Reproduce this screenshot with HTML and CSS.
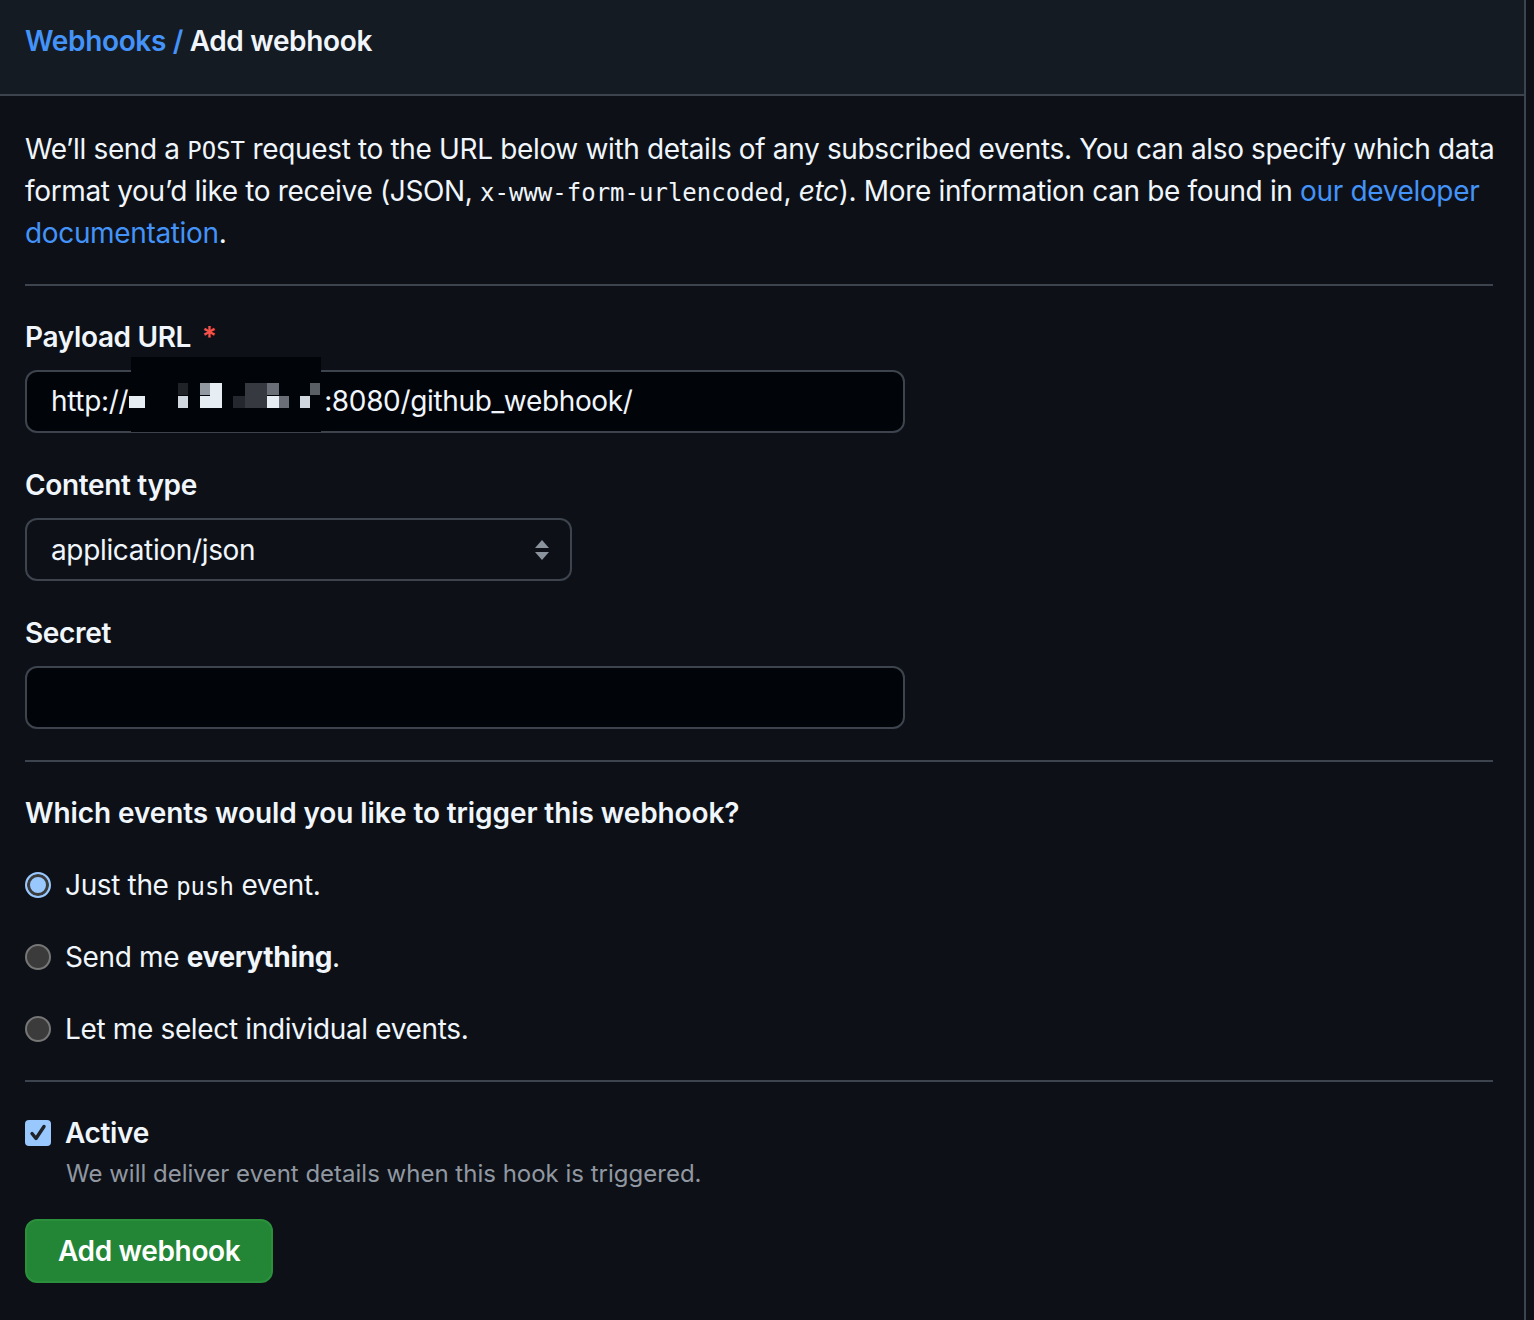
FILE: index.html
```html
<!DOCTYPE html>
<html lang="en">
<head>
<meta charset="utf-8">
<title>Add webhook</title>
<link rel="stylesheet" href="styles.css">
</head>
<body>
<div class="panel">
  <header class="subhead">
    <h2 class="subhead-title"><a href="#" class="crumb">Webhooks</a> <span class="sep">/</span> Add webhook</h2>
  </header>
  <div class="content">
    <p class="intro">We’ll send a <code>POST</code> request to the URL below with details of any subscribed events. You can also specify which data format you’d like to receive (JSON, <code>x-www-form-urlencoded</code>, <em>etc</em>). More information can be found in <a href="#">our developer documentation</a>.</p>

    <hr class="rule">

    <div class="field">
      <label class="label">Payload URL <span class="req">*</span></label>
      <div class="input-wrap">
        <div class="input">http://<span class="gap"></span>:8080/github_webhook/</div>
        <div class="redact">
          <span class="px p1"></span>
          <span class="px p2"></span>
          <span class="px p3"></span>
          <span class="px p4"></span>
          <span class="px p5"></span>
          <span class="px p6"></span>
          <span class="px p7"></span>
          <span class="px p8"></span>
          <span class="px p9"></span>
          <span class="px p10"></span>
          <span class="px p11"></span>
          <span class="px p12"></span>
        </div>
      </div>
    </div>

    <div class="field">
      <label class="label">Content type</label>
      <div class="select">
        <span>application/json</span>
        <svg class="updown" width="16" height="22" viewBox="0 0 16 22"><path d="M8 1 L15 9 H1 Z" fill="#8b939d"/><path d="M1 13 H15 L8 21 Z" fill="#8b939d"/></svg>
      </div>
    </div>

    <div class="field">
      <label class="label">Secret</label>
      <div class="input"></div>
    </div>

    <hr class="rule rule2">

    <h3 class="events-title">Which events would you like to trigger this webhook?</h3>

    <div class="radios">
      <div class="radio-row"><span class="radio checked"></span><span>Just the <code>push</code> event.</span></div>
      <div class="radio-row"><span class="radio"></span><span>Send me <strong>everything</strong>.</span></div>
      <div class="radio-row"><span class="radio"></span><span>Let me select individual events.</span></div>
    </div>

    <hr class="rule rule3">

    <div class="active">
      <div class="active-row">
        <span class="checkbox"><svg width="26" height="26" viewBox="0 0 26 26"><path d="M7 13.5 L11 18.5 L19 6.5" fill="none" stroke="#1f2328" stroke-width="3.4" stroke-linecap="round" stroke-linejoin="round"/></svg></span>
        <span class="active-label">Active</span>
      </div>
      <p class="note">We will deliver event details when this hook is triggered.</p>
    </div>

    <button class="btn">Add webhook</button>
  </div>
</div>
</body>
</html>
```

FILE: styles.css
```css
* { box-sizing: border-box; }
html, body { margin: 0; padding: 0; }
body {
  background: #0d1117;
  color: #f0f6fc;
  font-family: Inter, "Noto Sans", "Liberation Sans", sans-serif;
  font-size: 28px;
  line-height: 42px;
  letter-spacing: -0.35px;
}
.panel {
  width: 1526px;
  min-height: 1320px;
  border-right: 2px solid #3d444d;
}
.subhead {
  height: 96px;
  background: #151b23;
  border-bottom: 2px solid #3d444d;
  padding: 20px 25px 0;
}
.subhead-title {
  margin: 0;
  font-size: 28px;
  font-weight: 600;
  line-height: 42px;
  color: #f0f6fc;
}
.crumb, .sep { color: #4493f8; text-decoration: none; }
.content {
  padding: 32px 31px 0 25px;
}
a { color: #4493f8; text-decoration: none; }
code {
  font-family: "DejaVu Sans Mono", "Liberation Mono", monospace;
  font-size: 24px;
  line-height: 1;
  letter-spacing: 0;
}
.intro {
  margin: 0 -16px 0 0;
}
.rule {
  border: 0;
  height: 2px;
  background: #3d444d;
  margin: 30px 0 0;
}
.rule + .field { margin-top: 30px; }
.field + .field { margin-top: 31px; }
.label {
  display: block;
  font-weight: 600;
  line-height: 42px;
  margin-bottom: 12px;
}
.req { color: #f85149; margin-left: 4px; }
.input-wrap { position: relative; width: 880px; }
.input {
  width: 880px;
  height: 63px;
  background: #010409;
  border: 2px solid #3d444d;
  border-radius: 12px;
  padding: 0 24px;
  line-height: 59px;
  color: #f0f6fc;
  white-space: nowrap;
  overflow: hidden;
}
.gap { display: inline-block; width: 196px; }
.redact {
  position: absolute;
  left: 106px;
  top: -13px;
  width: 190px;
  height: 75px;
  background: #010409;
}
.px { position: absolute; display: block; }
.p1 { left: -2px; top: 39px; width: 16px; height: 12px; background: #e6edf3; }
.p2 { left: 47px; top: 26px; width: 10px; height: 12px; background: #1f2328; }
.p3 { left: 47px; top: 39px; width: 10px; height: 12px; background: #d1d7de; }
.p4 { left: 69px; top: 26px; width: 10px; height: 12px; background: #9399a1; }
.p5 { left: 79px; top: 26px; width: 12px; height: 25px; background: #e6edf3; }
.p6 { left: 69px; top: 39px; width: 10px; height: 12px; background: #e6edf3; }
.p7 { left: 102px; top: 39px; width: 12px; height: 12px; background: #24282e; }
.p8 { left: 114px; top: 26px; width: 22px; height: 25px; background: #363a40; }
.p9 { left: 136px; top: 26px; width: 12px; height: 12px; background: #6a6f77; }
.p10 { left: 136px; top: 39px; width: 12px; height: 12px; background: #e6edf3; }
.p11 { left: 148px; top: 39px; width: 10px; height: 12px; background: #6a6f77; }
.p12 { left: 169px; top: 39px; width: 10px; height: 12px; background: #d1d7de; }
.p12::after { content: ""; position: absolute; left: 10px; top: -13px; width: 10px; height: 12px; background: #5a5f66; }
.select {
  width: 547px;
  height: 63px;
  background: #0d1117;
  border: 2px solid #3d444d;
  border-radius: 12px;
  padding: 0 24px;
  display: flex;
  align-items: center;
  justify-content: space-between;
}
.updown { margin-right: -4px; }
.rule2 { margin-top: 31px; }
.events-title {
  margin: 30px 0 0;
  font-size: 28px;
  font-weight: 600;
  line-height: 42px;
  letter-spacing: -0.1px;
}
.radios {
  margin-top: 30px;
  display: flex;
  flex-direction: column;
  gap: 30px;
}
.radio-row {
  display: flex;
  align-items: center;
  gap: 14px;
}
.radio {
  flex: none;
  width: 26px;
  height: 26px;
  border-radius: 50%;
  background: #3b3b3b;
  border: 2px solid #767676;
}
.radio.checked {
  background: #99c8ff;
  border: 2px solid #99c8ff;
  box-shadow: inset 0 0 0 3px #3b3b3b;
}
.rule3 { margin-top: 30px; }
.active { margin-top: 30px; }
.active-row {
  display: flex;
  align-items: center;
  gap: 14px;
}
.checkbox {
  flex: none;
  width: 26px;
  height: 26px;
  border-radius: 4px;
  background: #99c8ff;
  display: block;
}
.checkbox svg { display: block; }
.active-label { font-weight: 600; }
.note {
  margin: 0 0 0 41px;
  color: #9198a1;
  font-size: 24px;
  line-height: 40px;
  letter-spacing: 0;
}
.btn {
  margin-top: 25px;
  height: 64px;
  padding: 0 31px;
  background: #238636;
  border: 2px solid #2a903b;
  border-radius: 12px;
  color: #ffffff;
  font-family: inherit;
  font-size: 28px;
  font-weight: 600;
  line-height: 60px;
  letter-spacing: -0.35px;
}
```
